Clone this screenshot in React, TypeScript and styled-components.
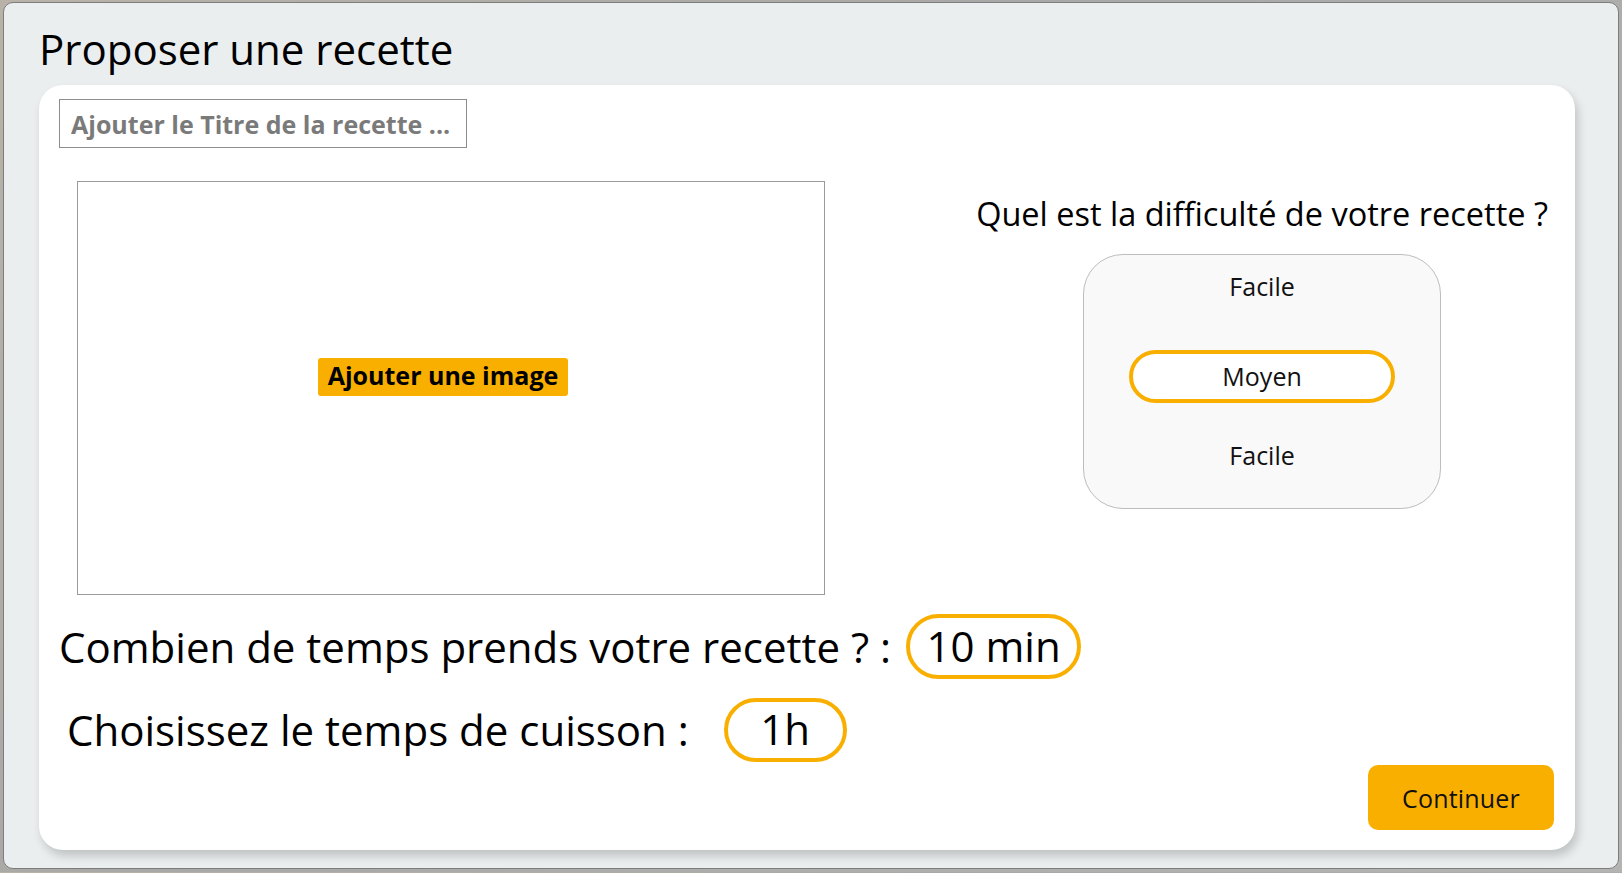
import React from 'react'
import styled, { createGlobalStyle } from 'styled-components'

const accent = '#f9af00'

const GlobalStyle = createGlobalStyle`
  html, body {
    margin: 0;
    padding: 0;
    background: linear-gradient(135deg, #b9b2a8 0%, #a8a8a6 40%, #b4b4b2 100%);
    font-family: 'Open Sans', 'Noto Sans', sans-serif;
    color: #000;
  }
  #root {
    padding: 2px 3px 3px 3px;
  }
`

const Window = styled.div`
  box-sizing: border-box;
  width: 1616px;
  background: #eaeeef;
  border: 1px solid #7d7d7d;
  border-radius: 10px;
  padding: 21px 43px 18px 35px;
  display: flex;
  flex-direction: column;
`

const PageTitle = styled.h1`
  margin: 0 0 11px;
  font-size: 42px;
  font-weight: 400;
  line-height: 1.2;
`

const Card = styled.div`
  background: #fff;
  border-radius: 24px;
  box-shadow: 3px 6px 10px rgba(0, 0, 0, 0.18);
  padding: 14px 21px 20px 20px;
  display: flex;
  flex-direction: column;
`

const TitleInput = styled.input`
  box-sizing: border-box;
  width: 408px;
  height: 49px;
  border: 1px solid #8d8d8d;
  padding: 0 0 0 11px;
  font-family: inherit;
  font-size: 25px;
  font-weight: 700;
  color: #333;
  outline: none;

  &::placeholder {
    color: #7a7a7a;
    opacity: 1;
  }
`

const MainRow = styled.div`
  display: flex;
  align-items: flex-start;
  margin-top: 33px;
`

const ImageBox = styled.div`
  box-sizing: border-box;
  width: 748px;
  height: 414px;
  margin-left: 18px;
  border: 1px solid #9a9a9a;
  display: flex;
  align-items: center;
  justify-content: center;
  padding: 0 16px 22px 0;
`

const ImageButton = styled.button`
  width: 250px;
  height: 38px;
  border: none;
  border-radius: 3px;
  background: ${accent};
  font-family: inherit;
  font-size: 25px;
  font-weight: 700;
  color: #000;
  padding: 0 0 4px;
  cursor: pointer;
`

const DifficultyColumn = styled.div`
  margin: 17px 6px 0 auto;
  display: flex;
  flex-direction: column;
  align-items: center;
`

const Question = styled.div`
  font-size: 32.5px;
  line-height: 32px;
  white-space: nowrap;
`

const DifficultyBox = styled.div`
  box-sizing: border-box;
  width: 358px;
  height: 255px;
  margin-top: 24px;
  background: #f9f9f9;
  border: 1px solid #bdbdbd;
  border-radius: 40px;
  padding-top: 16px;
  display: flex;
  flex-direction: column;
  align-items: center;
`

const Level = styled.div<{ $selected?: boolean; $gap: number }>`
  box-sizing: border-box;
  margin-top: ${(p) => p.$gap}px;
  font-size: 25px;
  line-height: 30px;
  color: #111;
  display: flex;
  align-items: center;
  justify-content: center;
  ${(p) =>
    p.$selected &&
    `
    width: 266px;
    height: 53px;
    border: 4px solid ${accent};
    border-radius: 30px;
    background: #fff;
    padding-bottom: 1px;
  `}
`

const TimeRow = styled.div<{ $indent: number }>`
  display: flex;
  align-items: center;
  margin-top: 19px;
  padding-left: ${(p) => p.$indent}px;
`

const TimeLabel = styled.span`
  font-size: 42px;
  line-height: 1;
  white-space: pre;
`

const TimePill = styled.div<{ $width: number; $height: number; $offset: number }>`
  box-sizing: border-box;
  width: ${(p) => p.$width}px;
  height: ${(p) => p.$height}px;
  margin-left: ${(p) => p.$offset}px;
  border: 4px solid ${accent};
  border-radius: 34px;
  display: flex;
  align-items: center;
  justify-content: center;
  font-size: 42px;
  line-height: 1;
  padding-bottom: 2px;
`

const Footer = styled.div`
  display: flex;
  justify-content: flex-end;
  margin-top: 3px;
`

const ContinueButton = styled.button`
  width: 186px;
  height: 65px;
  border: none;
  border-radius: 10px;
  background: ${accent};
  font-family: inherit;
  font-size: 25px;
  letter-spacing: 0.2px;
  color: #111;
  cursor: pointer;
`

const App = () => {
  return (
    <>
      <GlobalStyle />
      <Window>
        <PageTitle>Proposer une recette</PageTitle>
        <Card>
          <TitleInput placeholder="Ajouter le Titre de la recette ..." />
          <MainRow>
            <ImageBox>
              <ImageButton>Ajouter une image</ImageButton>
            </ImageBox>
            <DifficultyColumn>
              <Question>Quel est la difficulté de votre recette ?</Question>
              <DifficultyBox>
                <Level $gap={0}>Facile</Level>
                <Level $gap={49} $selected>
                  Moyen
                </Level>
                <Level $gap={37}>Facile</Level>
              </DifficultyBox>
            </DifficultyColumn>
          </MainRow>
          <TimeRow $indent={0}>
            <TimeLabel>Combien de temps prends votre recette ? :</TimeLabel>
            <TimePill $width={175} $height={65} $offset={15}>
              10 min
            </TimePill>
          </TimeRow>
          <TimeRow $indent={8}>
            <TimeLabel>Choisissez le temps de cuisson :</TimeLabel>
            <TimePill $width={123} $height={64} $offset={35}>
              1h
            </TimePill>
          </TimeRow>
          <Footer>
            <ContinueButton>Continuer</ContinueButton>
          </Footer>
        </Card>
      </Window>
    </>
  )
}

export default App
